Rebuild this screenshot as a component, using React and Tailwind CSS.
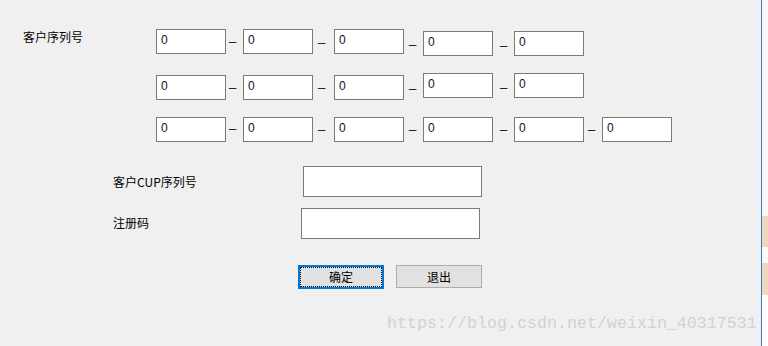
import React from "react";

const rows = [
  { top: 29, h: 44, boxes: [0, 0, 0, 2, 2], dashes: [42, 43, 45, 46] },
  { top: 73, h: 44, boxes: [2, 2, 2, 0, 0], dashes: [88, 88, 89, 88] },
  { top: 117, h: 25, boxes: [0, 0, 0, 0, 0, 0], dashes: [129, 130, 130, 130, 130] },
];

const gaps = [
  { w: 17, x: 3 },
  { w: 21, x: 5 },
  { w: 19, x: 5 },
  { w: 21, x: 7 },
  { w: 18, x: 4 },
];

function Box({ mt }) {
  return (
    <div
      className="w-[70px] h-[25px] shrink-0 border border-[#7a7a7a] bg-white pl-[4px] pt-[2px] text-[12px] leading-[16px] text-[#101030] font-['Liberation_Sans',sans-serif]"
      style={{ marginTop: mt }}
    >
      0
    </div>
  );
}

function Dash({ gap, y }) {
  return (
    <div className="shrink-0 grow-0 flex items-start" style={{ width: gap.w, flexBasis: gap.w }}>
      <span
        className="block text-[13px] leading-[12px] text-black font-['Liberation_Sans',sans-serif]"
        style={{ marginLeft: gap.x, marginTop: y }}
      >
        _
      </span>
    </div>
  );
}

function Row({ row }) {
  const items = [];
  row.boxes.forEach((mt, i) => {
    items.push(<Box key={"b" + i} mt={mt} />);
    if (i < row.boxes.length - 1) {
      items.push(<Dash key={"d" + i} gap={gaps[i]} y={Math.max(0, row.dashes[i] - row.top - 12)} />);
    }
  });
  return (
    <div className="flex items-start" style={{ height: row.h }}>
      {items}
    </div>
  );
}

export default function App() {
  return (
    <div className="relative flex w-[768px] h-[346px] overflow-hidden bg-[#f0f0f0] text-black font-['Noto_Sans_CJK_SC',sans-serif]">
      <div className="w-[761px] h-full shrink-0 flex flex-col">
        <div className="flex pt-[29px] pl-[23px]">
          <div className="w-[133px] shrink-0 text-[12px] leading-[16px]">客户序列号</div>
          <div className="flex flex-col">
            {rows.map((r, i) => (
              <Row key={i} row={r} />
            ))}
          </div>
        </div>

        <div className="flex mt-[24px] pl-[113px]">
          <div className="w-[190px] shrink-0 pt-[8px] text-[12px] leading-[16px]">客户CUP序列号</div>
          <div className="w-[179px] h-[31px] border border-[#7a7a7a] bg-white" />
        </div>

        <div className="flex mt-[11px] pl-[113px]">
          <div className="w-[188px] shrink-0 pt-[7px] text-[12px] leading-[16px]">注册码</div>
          <div className="w-[179px] h-[31px] border border-[#7a7a7a] bg-white" />
        </div>

        <div className="flex items-start mt-[26px] pl-[298px] gap-[12px]">
          <div className="w-[86px] h-[24px] border-2 border-[#0078d7] bg-[#e1e1e1]">
            <div className="w-full h-full border border-dotted border-black flex items-center justify-center text-[12px] leading-[16px]">
              确定
            </div>
          </div>
          <div className="w-[86px] h-[23px] border border-[#adadad] bg-[#e1e1e1] flex items-center justify-center text-[12px] leading-[16px]">
            退出
          </div>
        </div>
      </div>

      <div className="w-px h-full shrink-0 bg-[#2b7fd6]" />
      <div className="w-[6px] h-full shrink-0 bg-white flex flex-col">
        <div className="h-[216px] bg-[#f7f7f7]" />
        <div className="h-[31px] bg-[#efd8bb]" />
        <div className="h-[16px] bg-[#fafafa]" />
        <div className="h-[32px] bg-[#efd8bb]" />
      </div>

      <div className="absolute left-[387px] top-[314px] text-[16.67px] leading-[20px] text-[#d2d2d0] font-['Liberation_Mono',monospace] whitespace-nowrap">
        https://blog.csdn.net/weixin_40317531
      </div>
    </div>
  );
}
